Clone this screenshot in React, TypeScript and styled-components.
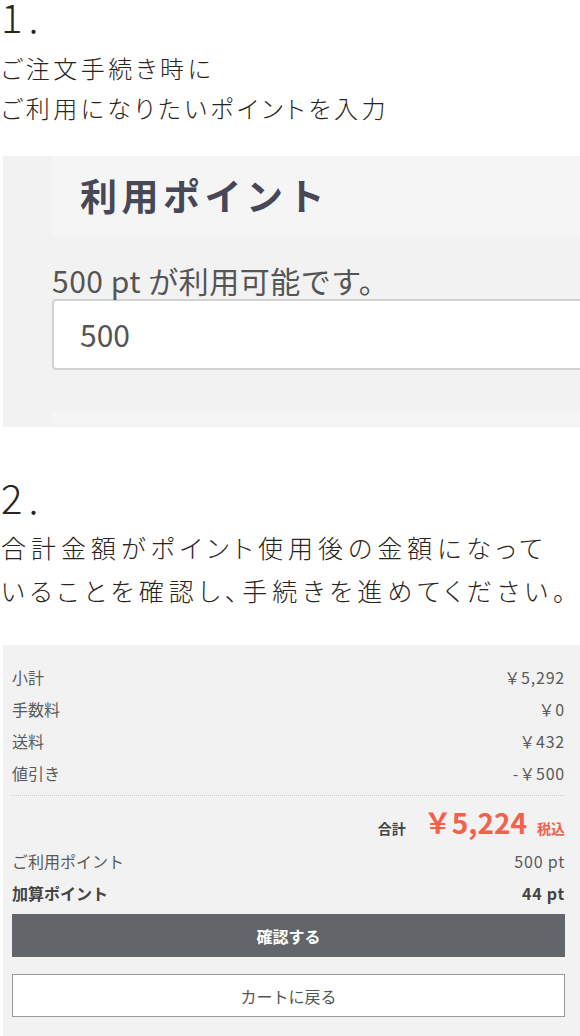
import React from 'react';
import styled, { createGlobalStyle } from 'styled-components';

const GlobalStyle = createGlobalStyle`
  html, body {
    margin: 0;
    padding: 0;
    background: #ffffff;
  }
  body {
    font-family: "Noto Sans CJK JP", "Noto Sans", sans-serif;
  }
`;

const Page = styled.div`
  width: 580px;
  overflow: hidden;
`;

const Step = styled.section<{ gap: number }>`
  margin-top: ${p => p.gap}px;
  color: #2a2320;
  font-family: "Noto Sans CJK JP", sans-serif;
  font-weight: 300;
`;

const StepNo = styled.div<{ h: number }>`
  height: ${p => p.h}px;
  font-size: 40px;
  line-height: 32px;
  padding-left: 1px;
  letter-spacing: 6px;
`;

const StepText = styled.p<{ lh: number; size: number; ls: number }>`
  margin: 0;
  font-size: ${p => p.size}px;
  line-height: ${p => p.lh}px;
  letter-spacing: ${p => p.ls}px;
  font-feature-settings: "palt";
  white-space: nowrap;
  padding-left: 1px;
`;

/* screenshot 1: points entry */
const ShotPanel = styled.div`
  margin: 28px 0 0 3px;
  height: 271px;
  background: #f2f2f2;
  padding-left: 49px;
  overflow: hidden;
`;

const ShotHeader = styled.div`
  height: 79px;
  background: #f5f5f5;
  padding-left: 28px;
  font-size: 37px;
  font-weight: 700;
  line-height: 79px;
  color: #474757;
  letter-spacing: 4.5px;
`;

const Available = styled.div`
  margin-top: 28px;
  font-size: 30px;
  line-height: 34px;
  color: #555555;
  letter-spacing: 0.5px;
  white-space: nowrap;
`;

const PointInput = styled.div`
  margin-top: 2px;
  width: 620px;
  height: 71px;
  box-sizing: border-box;
  background: #ffffff;
  border: 2px solid #d2d2d2;
  border-radius: 4px;
  padding-left: 26px;
  font-size: 30px;
  line-height: 67px;
  color: #555555;
`;

const ShotFooter = styled.div`
  margin-top: 41px;
  height: 14px;
  background: #f5f5f5;
`;

/* screenshot 2: order summary */
const Summary = styled.div`
  margin: 33px 0 0 3px;
  background: #f2f2f2;
  padding: 16px 15px 19px 9px;
  color: #555555;
  font-size: 16px;
`;

const Row = styled.div<{ bold?: boolean }>`
  display: flex;
  justify-content: space-between;
  align-items: baseline;
  line-height: 32px;
  font-weight: ${p => (p.bold ? 700 : 400)};
  color: ${p => (p.bold ? '#444444' : '#5a5a5a')};
`;

const Value = styled.span`
  letter-spacing: 0.8px;
`;

const Divider = styled.div`
  margin-top: 6px;
  border-top: 1px dotted #cccccc;
`;

const TotalRow = styled.div`
  display: flex;
  justify-content: flex-end;
  align-items: baseline;
  height: 49px;
  padding-top: 8px;
  box-sizing: border-box;
  line-height: 36px;
`;

const TotalLabel = styled.span`
  font-size: 14px;
  font-weight: 700;
  color: #444444;
  margin-right: 18px;
`;

const TotalPrice = styled.span`
  font-size: 28px;
  font-weight: 700;
  color: #f5604a;
  margin-right: 10px;
`;

const TaxNote = styled.span`
  font-size: 14px;
  font-weight: 700;
  color: #f5604a;
`;

const Button = styled.div<{ primary?: boolean }>`
  height: 43px;
  box-sizing: border-box;
  display: flex;
  align-items: center;
  justify-content: center;
  font-size: 16px;
  margin-top: ${p => (p.primary ? 5 : 17)}px;
  background: ${p => (p.primary ? '#626569' : '#ffffff')};
  color: ${p => (p.primary ? '#ffffff' : '#555555')};
  font-weight: ${p => (p.primary ? 700 : 400)};
  border: ${p => (p.primary ? 'none' : '1px solid #999999')};
`;

const lines = [
  { label: '小計', value: '￥5,292' },
  { label: '手数料', value: '￥0' },
  { label: '送料', value: '￥432' },
  { label: '値引き', value: '-￥500' },
];

export default function App() {
  return (
    <Page>
      <GlobalStyle />
      <Step gap={0}>
        <StepNo h={48}>1.</StepNo>
        <StepText lh={40} size={24} ls={3.5}>
          ご注文手続き時に
          <br />
          ご利用になりたいポイントを入力
        </StepText>
      </Step>

      <ShotPanel>
        <ShotHeader>利用ポイント</ShotHeader>
        <Available>500 pt が利用可能です。</Available>
        <PointInput>500</PointInput>
        <ShotFooter />
      </ShotPanel>

      <Step gap={54}>
        <StepNo h={45}>2.</StepNo>
        <StepText lh={43} size={25} ls={5}>
          合計金額がポイント使用後の金額になって
          <br />
          いることを確認し、手続きを進めてください。
        </StepText>
      </Step>

      <Summary>
        {lines.map(l => (
          <Row key={l.label}>
            <span>{l.label}</span>
            <Value>{l.value}</Value>
          </Row>
        ))}
        <Divider />
        <TotalRow>
          <TotalLabel>合計</TotalLabel>
          <TotalPrice>￥5,224</TotalPrice>
          <TaxNote>税込</TaxNote>
        </TotalRow>
        <Row>
          <span>ご利用ポイント</span>
          <Value>500 pt</Value>
        </Row>
        <Row bold>
          <span>加算ポイント</span>
          <Value>44 pt</Value>
        </Row>
        <Button primary>確認する</Button>
        <Button>カートに戻る</Button>
      </Summary>
    </Page>
  );
}
